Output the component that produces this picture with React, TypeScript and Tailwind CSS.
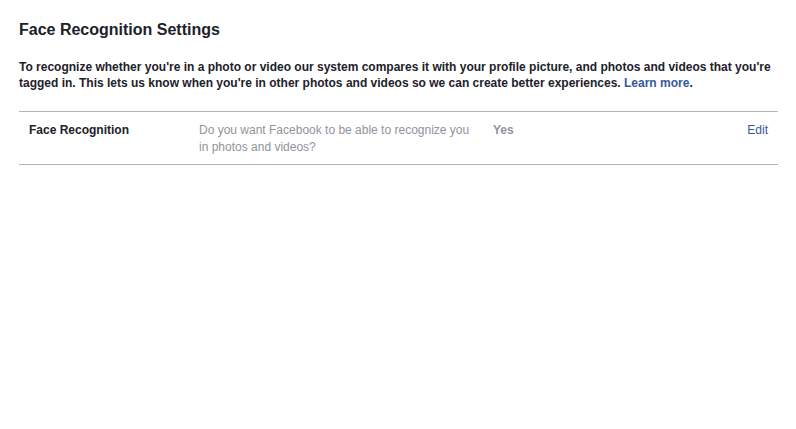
export default function App() {
  return (
    <div className="min-h-screen bg-white font-['Liberation_Sans',Arial,sans-serif] text-[#1d2129]">
      <div className="ml-[19px] w-[759px] pt-5">
        <h2 className="text-[16px] leading-[20px] font-bold">Face Recognition Settings</h2>
        <p className="mt-[19px] text-[12px] leading-[16px] font-bold">
          To recognize whether you're in a photo or video our system compares it with your profile picture, and photos and videos that you're tagged in. This lets us know when you're in other photos and videos so we can create better experiences.{" "}
          <a href="#" className="text-[#365899] hover:underline">Learn more</a>.
        </p>

        <div className="mt-5 border-t border-b border-[#b4b4b4]">
          <div className="flex pt-[10px] pb-[9px] pl-[10px] pr-[10px] text-[12px] leading-[1.38]">
            <div className="w-[170px] shrink-0 font-bold">Face Recognition</div>
            <div className="w-[294px] shrink-0 pr-[15px] text-[#90949c]">
              Do you want Facebook to be able to recognize you in photos and videos?
            </div>
            <div className="flex-1 font-bold text-[#90949c]">Yes</div>
            <a href="#" className="text-[#365899] hover:underline">Edit</a>
          </div>
        </div>
      </div>
    </div>
  );
}
